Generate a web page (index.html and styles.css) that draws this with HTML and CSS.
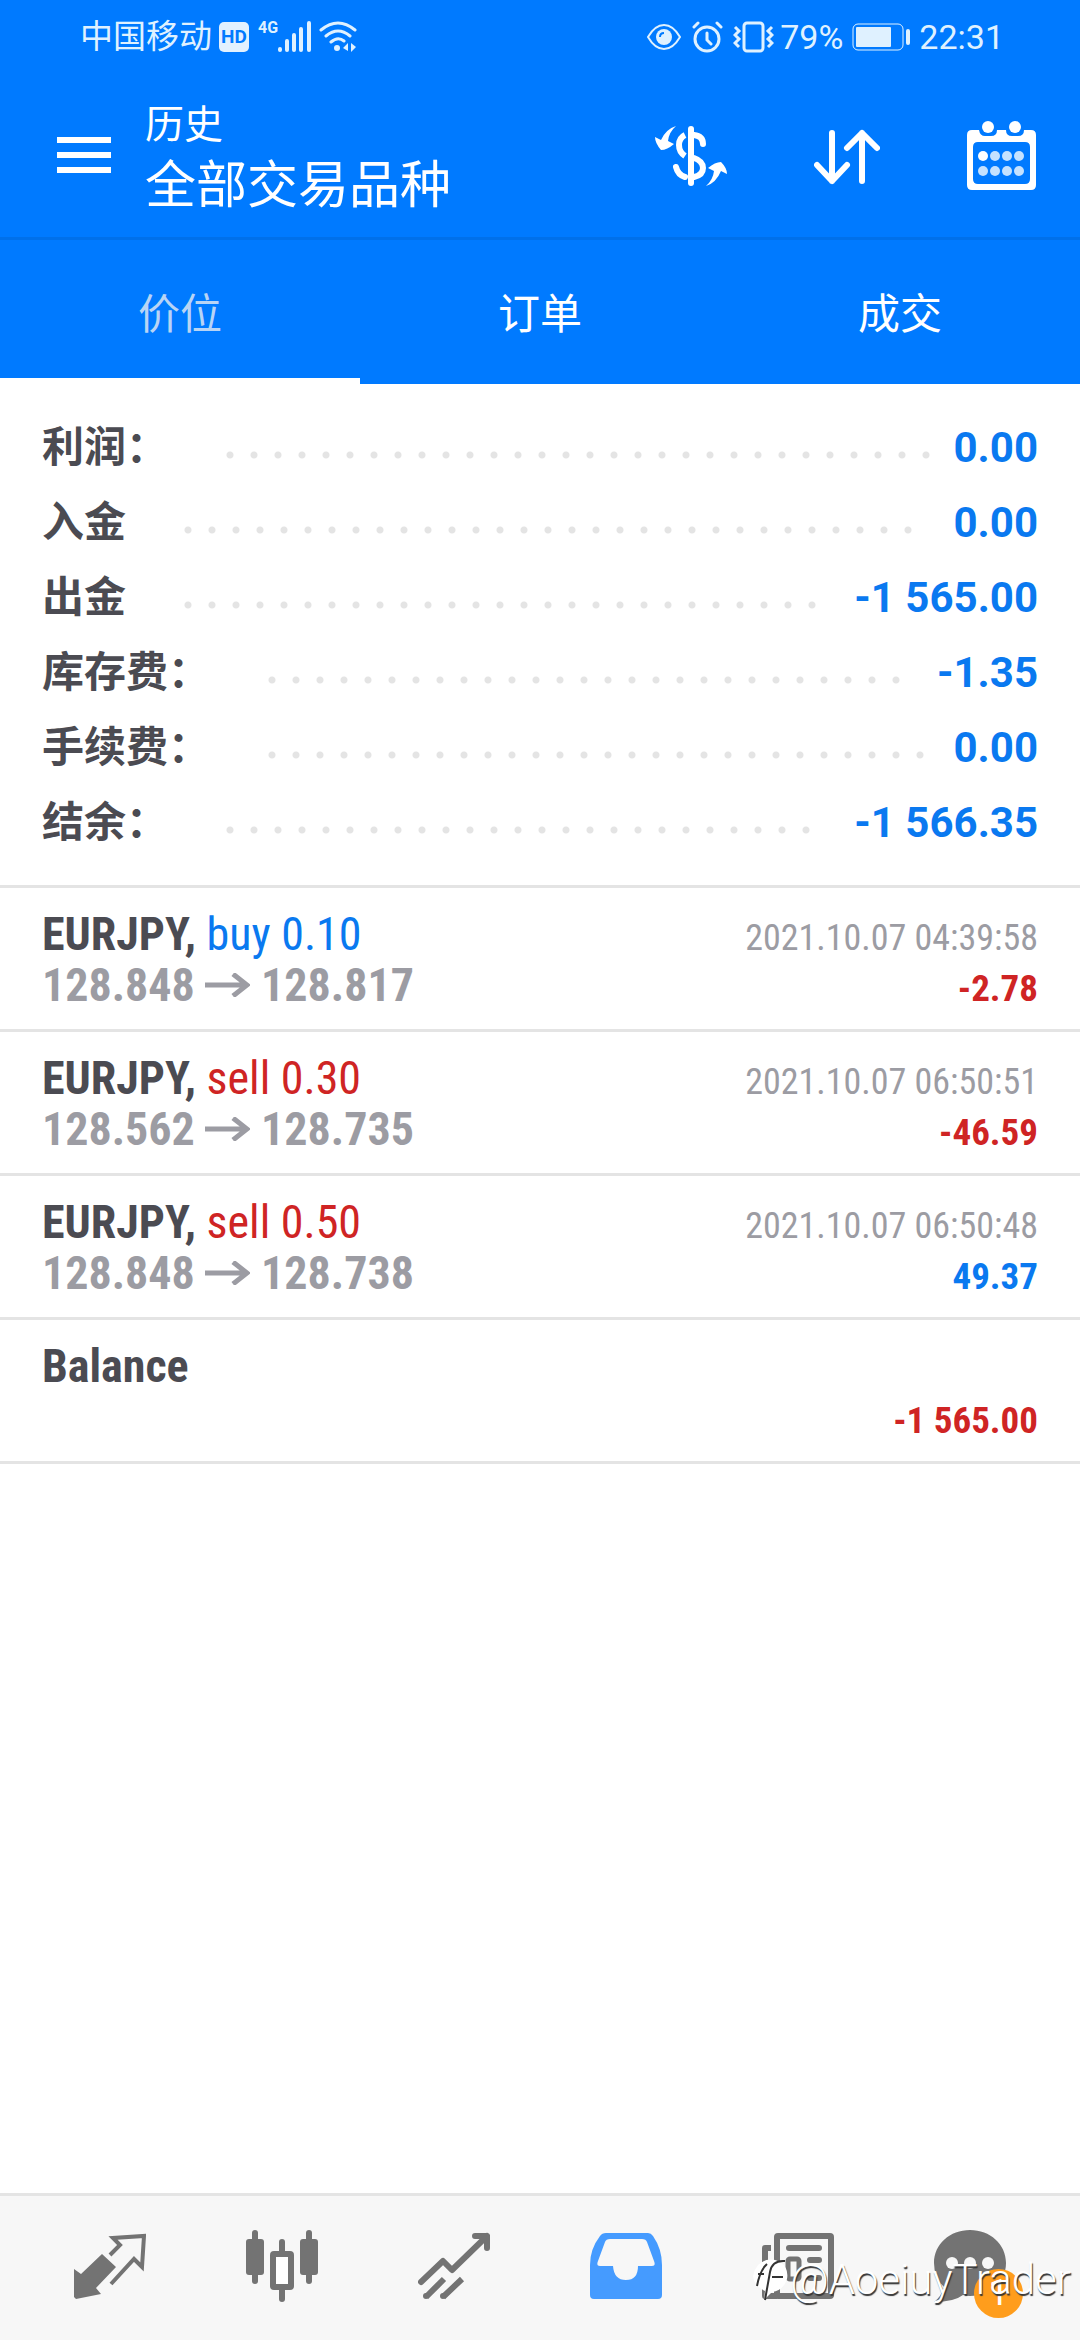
FILE: index.html
```html
<!DOCTYPE html>
<html lang="zh-CN">
<head>
<meta charset="utf-8">
<meta name="viewport" content="width=device-width, initial-scale=1">
<title>历史</title>
<link rel="stylesheet" href="styles.css">
</head>
<body>
<div class="app">
  <div class="status">
    <span class="carrier">中国移动</span>
    <span class="hd">HD</span>
    <span class="net">4G</span>
    <svg class="signal" width="33" height="31" viewBox="0 0 33 31" aria-hidden="true"><g stroke="currentColor" stroke-width="4" stroke-linecap="round"><path d="M2 28v1M9 20v9M16 14v15M23 8v21M31 2v27"/></g></svg>
    <svg class="wifi" width="38" height="31" viewBox="0 0 38 31" aria-hidden="true"><g fill="none" stroke="currentColor" stroke-width="3" stroke-linecap="round"><path d="M2 9Q19-5 36 9M7 15Q19 5 31 15M12 21Q19 15 25 20"/></g><circle cx="18" cy="27" r="3" fill="currentColor"/><path d="M24 27l5-5v8zM32 22v9l5-5z" fill="currentColor"/></svg>
    <svg class="eye" width="34" height="32" viewBox="0 0 34 32" aria-hidden="true"><path d="M1 16Q8 4 17 4T33 16Q26 28 17 28T1 16z" fill="none" stroke="currentColor" stroke-width="2"/><circle cx="17" cy="16" r="8" fill="currentColor"/><path d="M13 16q0-4 4-4" fill="none" stroke="#007aff" stroke-width="2"/></svg>
    <svg class="alarm" width="31" height="32" viewBox="0 0 31 32" aria-hidden="true"><g fill="none" stroke="currentColor" stroke-width="3" stroke-linecap="round"><circle cx="15" cy="18" r="12"/><path d="M2 6l4-4M29 6l-4-4M15 12v7l4 4"/></g></svg>
    <svg class="vibrate" width="41" height="32" viewBox="0 0 41 32" aria-hidden="true"><g fill="none" stroke="currentColor" stroke-width="3"><rect x="11" y="2" width="19" height="28" rx="3"/><path d="M2 6l4 4-4 4 4 4-4 4 4 4M39 6l-4 4 4 4-4 4 4 4-4 4"/></g></svg>
    <span class="percent">79%</span>
    <svg class="battery" width="58" height="28" viewBox="0 0 58 28" aria-hidden="true"><rect x="1" y="1" width="50" height="26" rx="5" fill="none" stroke="currentColor" stroke-width="1"/><rect x="4" y="4" width="35" height="20" rx="1" fill="currentColor"/><path d="M56 8v12" stroke="currentColor" stroke-width="4" stroke-linecap="round"/></svg>
    <time>22:31</time>
  </div>

  <header class="bar">
    <button class="icon-button" type="button" aria-label="菜单"><svg width="54" height="36" viewBox="0 0 54 36"><path d="M0 3h54M0 18h54M0 33h54" stroke="#fff" stroke-width="6"/></svg></button>
    <div class="titles">
      <h1>历史</h1>
      <p>全部交易品种</p>
    </div>
    <div class="actions">
      <button class="icon-button" type="button" aria-label="货币"><svg width="72" height="69" viewBox="0 0 72 69"><path d="M36 8v54" stroke="#fff" stroke-width="6" stroke-linecap="round"/><path d="M30 14Q24 17 24 24T30 35" fill="none" stroke="#fff" stroke-width="6"/><path d="M39 14q9 1 9 9M21 46q2 8 9 10M39 37q9 3 9 10t-9 9" fill="none" stroke="#fff" stroke-width="6" stroke-linecap="round"/><path d="M21 5Q11 8 6 19L0 16q0 6 6 13 6 0 13-6l-6-3Q14 11 21 5zM51 65Q61 62 66 50l6 3q0-6-6-12-6 0-13 6l6 3Q58 59 51 65z" fill="#fff"/></svg></button>
      <button class="icon-button" type="button" aria-label="排序"><svg width="66" height="69" viewBox="0 0 66 69"><path d="M18 12v48M3 44l15 16 15-16M48 60V12M33 27l15-15 15 15" fill="none" stroke="#fff" stroke-width="6" stroke-linecap="round" stroke-linejoin="round"/></svg></button>
      <button class="icon-button" type="button" aria-label="日期"><svg width="69" height="69" viewBox="0 0 69 69"><path d="M5 9h7q1 6 6 6h6q6 0 6-6h9q0 6 6 6h6q6 0 6-6h7q5 0 5 5v50q0 5-5 5H5q-5 0-5-5V14q0-5 5-5zM11 21q-5 0-5 5v32q0 5 5 5h47q5 0 5-5V26q0-5-5-5z" fill="#fff" fill-rule="evenodd"/><g fill="#fff"><circle cx="21" cy="6" r="6"/><circle cx="48" cy="6" r="6"/><circle cx="16" cy="35" r="5"/></g><g fill="#c5e2ff"><circle cx="28" cy="35" r="5"/><circle cx="40" cy="35" r="5"/><circle cx="52" cy="35" r="5"/><circle cx="16" cy="50" r="5"/><circle cx="28" cy="50" r="5"/><circle cx="40" cy="50" r="5"/><circle cx="52" cy="50" r="5"/></g></svg></button>
    </div>
  </header>

  <div class="tabs" role="tablist">
    <button class="tab tab-active" type="button" role="tab" aria-selected="true">价位</button>
    <button class="tab" type="button" role="tab" aria-selected="false">订单</button>
    <button class="tab" type="button" role="tab" aria-selected="false">成交</button>
  </div>

  <main class="content">
    <dl class="summary">
      <div class="line"><dt>利润：</dt><dd>0.00</dd></div>
      <div class="line"><dt>入金</dt><dd>0.00</dd></div>
      <div class="line"><dt>出金</dt><dd>-1 565.00</dd></div>
      <div class="line"><dt>库存费：</dt><dd>-1.35</dd></div>
      <div class="line"><dt>手续费：</dt><dd>0.00</dd></div>
      <div class="line"><dt>结余：</dt><dd>-1 566.35</dd></div>
    </dl>
    <ul class="deals">
      <li class="deal">
        <div class="row"><span><b>EURJPY,</b> <span class="blue">buy 0.10</span></span><time>2021.10.07 04:39:58</time></div>
        <div class="row"><span class="prices">128.848 <svg class="arrow" width="45" height="24" viewBox="0 0 45 24" role="img" aria-label="至"><path d="M0 12h42M28 1l14 11-14 11" fill="none" stroke="currentColor" stroke-width="5"/></svg> 128.817</span><strong class="red">-2.78</strong></div>
      </li>
      <li class="deal">
        <div class="row"><span><b>EURJPY,</b> <span class="red">sell 0.30</span></span><time>2021.10.07 06:50:51</time></div>
        <div class="row"><span class="prices">128.562 <svg class="arrow" width="45" height="24" viewBox="0 0 45 24" role="img" aria-label="至"><path d="M0 12h42M28 1l14 11-14 11" fill="none" stroke="currentColor" stroke-width="5"/></svg> 128.735</span><strong class="red">-46.59</strong></div>
      </li>
      <li class="deal">
        <div class="row"><span><b>EURJPY,</b> <span class="red">sell 0.50</span></span><time>2021.10.07 06:50:48</time></div>
        <div class="row"><span class="prices">128.848 <svg class="arrow" width="45" height="24" viewBox="0 0 45 24" role="img" aria-label="至"><path d="M0 12h42M28 1l14 11-14 11" fill="none" stroke="currentColor" stroke-width="5"/></svg> 128.738</span><strong class="blue">49.37</strong></div>
      </li>
      <li class="deal">
        <div class="row"><b>Balance</b></div>
        <div class="row"><strong class="red">-1 565.00</strong></div>
      </li>
    </ul>
  </main>

  <nav class="nav">
    <a href="#quotes" aria-label="行情"><svg width="72" height="72" viewBox="0 0 72 72"><path d="M28 24L42 37 22 58l5 6-25 5-2-2V39l7 5z" fill="currentColor"/><path d="M36 25l10-10-7-7 31-2-2 31-8-8-23 25" fill="none" stroke="currentColor" stroke-width="4"/></svg></a>
    <a href="#chart" aria-label="图表"><svg width="72" height="72" viewBox="0 0 72 72"><g fill="currentColor"><rect y="9" width="18" height="36" rx="3"/><rect x="6" width="6" height="54" rx="3"/><rect x="54" y="9" width="18" height="36" rx="3"/><rect x="60" width="6" height="54" rx="3"/><rect x="33" y="9" width="6" height="15" rx="3"/><rect x="33" y="57" width="6" height="15" rx="3"/></g><rect x="27" y="24" width="18" height="33" rx="1" fill="#fff" stroke="currentColor" stroke-width="6"/></svg></a>
    <a href="#trade" aria-label="交易"><svg width="72" height="72" viewBox="0 0 72 72"><path d="M3 52l22-21 9 9L69 6M57 6h12v12" fill="none" stroke="currentColor" stroke-width="6" stroke-linecap="round" stroke-linejoin="round"/><path d="M8 67l18-18M25 67l19-18" stroke="currentColor" stroke-width="6"/><circle cx="8" cy="66" r="3" fill="currentColor"/><circle cx="25" cy="66" r="3" fill="currentColor"/></svg></a>
    <a class="nav-active" href="#history" aria-label="历史" aria-current="page"><svg width="72" height="72" viewBox="0 0 72 72"><path d="M16 3h42q3 0 5 3 9 13 9 29v30q0 4-4 4H4q-4 0-4-4V35Q0 19 10 6q2-3 6-3zM20 9q-4 0-5 3L8 31q-2 5 2 5h13q1 14 13 14t12-14h14q4 0 2-5l-7-19q-1-3-5-3z" fill="currentColor" fill-rule="evenodd"/></svg></a>
    <a href="#news" aria-label="新闻"><svg width="72" height="72" viewBox="0 0 72 72"><rect x="15" y="6" width="54" height="60" rx="1" fill="none" stroke="currentColor" stroke-width="6"/><path d="M9 18H3v48h12" fill="none" stroke="currentColor" stroke-width="6" stroke-linejoin="round"/><path d="M27 18h30M48 30h9M48 48h9" stroke="currentColor" stroke-width="6" stroke-linecap="round"/><rect x="26" y="29" width="11" height="20" rx="2" fill="none" stroke="currentColor" stroke-width="5"/></svg></a>
    <a href="#chat" aria-label="消息"><svg width="72" height="72" viewBox="0 0 72 72"><path d="M36 0c20 0 36 14 36 33S56 66 36 66q-4 0-7-1-9 7-29 7 7-5 10-15Q0 48 0 33C0 14 16 0 36 0z" fill="currentColor"/><g fill="#f7f7f7"><circle cx="18" cy="33" r="6"/><circle cx="36" cy="33" r="6"/><circle cx="54" cy="33" r="6"/></g></svg><span class="badge">1</span></a>
  </nav>
  <div class="watermark">
    <svg width="38" height="44" viewBox="0 0 38 44" aria-hidden="true"><path d="M6 7Q16-2 28 4q9 6 7 17-3 11-15 13l-8 8 1-9Q2 28 1 18q1-6 5-11z" fill="#fff"/><path d="M33 3Q20 2 18 14l-5 28M5 28Q8 12 15 6M6 16h6M20 19h11" fill="none" stroke="#333" stroke-width="2"/></svg>
    <span>@AoeiuyTrader</span>
  </div>
</div>
</body>
</html>
```

FILE: styles.css
```css
* { box-sizing: border-box; margin: 0; padding: 0; }

body {
  font-family: Roboto, "Noto Sans CJK SC", sans-serif;
  color: #4b4b52;
  background: #fff;
}

button { border: 0; background: none; color: inherit; font: inherit; }
svg { display: block; flex: none; }

.app { position: relative; display: flex; flex-direction: column; min-height: 100vh; }

/* Status bar */
.status {
  display: flex;
  align-items: center;
  height: 75px;
  padding: 0 76px 2px 80px;
  background: #007aff;
  color: #dff1ff;
  font-size: 34px;
  line-height: 40px;
}
.carrier { font-size: 33px; }
.hd {
  width: 30px;
  margin-left: 7px;
  border-radius: 5px;
  background: #e2f1ff;
  color: #007aff;
  font-size: 19px;
  font-weight: 700;
  line-height: 30px;
  text-align: center;
}
.net { align-self: flex-start; margin: 18px 0 0 9px; font-size: 16px; font-weight: 700; line-height: 20px; }
.wifi { margin-left: 8px; }
.eye { margin-left: auto; }
.alarm { margin-left: 11px; }
.vibrate { margin-left: 10px; }
.percent { margin-left: 6px; }
.battery { margin: 0 9px; }

/* Title bar */
.bar {
  display: flex;
  align-items: center;
  height: 165px;
  padding: 0 44px 2px 57px;
  border-bottom: 3px solid #0070ea;
  background: #007aff;
  color: #fff;
}
.titles { margin-left: 34px; padding-top: 6px; }
.titles h1 { font-size: 39px; font-weight: 400; line-height: 56px; }
.titles p { font-size: 51px; line-height: 66px; }
.actions { display: flex; gap: 87px; margin-left: auto; }

/* Tabs */
.tabs { display: grid; grid-template-columns: repeat(3, 1fr); height: 144px; background: #007aff; color: #fff; }
.tab { border-bottom: 6px solid transparent; padding-top: 2px; font-size: 42px; }
.tab-active { border-bottom-color: #fff; color: #b8d4f5; }

/* Account totals */
.summary { padding: 26px 42px 25px; font-size: 42px; font-weight: 700; line-height: 75px; }
.line { display: grid; grid-template-columns: auto 1fr auto; height: 75px; }
.line dt { grid-area: 1 / 1; margin-right: 58px; }
.line dd { grid-area: 1 / 3; margin-left: 22px; color: #0a79f0; }

/* Dotted leader, cut to a whole number of dots */
.line::before {
  grid-area: 1 / 2;
  width: round(down, 100% + 16px, 24px);
  height: 8px;
  margin-top: 41px;
  background: radial-gradient(circle at 4px 4px, #e4e4e4 3px, transparent 4px) 0 0 / 24px 8px repeat-x;
  content: "";
}

/* Deals */
.content { flex: 1; }
.deals { border-top: 3px solid #e4e4e4; font-family: "Roboto Condensed", Roboto, sans-serif; list-style: none; }
.deal { padding: 21px 42px 18px; border-bottom: 3px solid #e4e4e4; font-size: 46px; line-height: 51px; }
.row { display: flex; align-items: baseline; height: 51px; }
.row::before { content: "\200b"; }
.row time, .row strong { margin-left: auto; font-size: 37px; }
.row time { color: #9c9ca3; font-size: 36px; }
.prices { color: #9c9ca3; font-weight: 700; }
.arrow { display: inline-block; vertical-align: 4px; }
.blue { color: #0a79f0; }
.red { color: #cf2424; }

/* Bottom navigation */
.nav {
  display: grid;
  grid-template-columns: repeat(6, 1fr);
  height: 147px;
  padding: 34px 24px 0;
  border-top: 3px solid #e4e4e4;
  background: #f7f7f7;
}
.nav a { position: relative; justify-self: center; align-self: start; color: #737373; }
.nav .nav-active { color: #459bff; }
.badge {
  position: absolute;
  left: 40px;
  top: 39px;
  width: 49px;
  height: 49px;
  border-radius: 50%;
  background: #ff9d1c;
  color: #fff;
  font-size: 36px;
  line-height: 49px;
  text-align: center;
}

.watermark {
  position: absolute;
  right: 9px;
  bottom: 36px;
  display: flex;
  align-items: center;
  color: #fff;
  font-size: 42px;
  font-weight: 300;
  line-height: 48px;
  text-shadow: 1px 2px 1px #333;
}
```
